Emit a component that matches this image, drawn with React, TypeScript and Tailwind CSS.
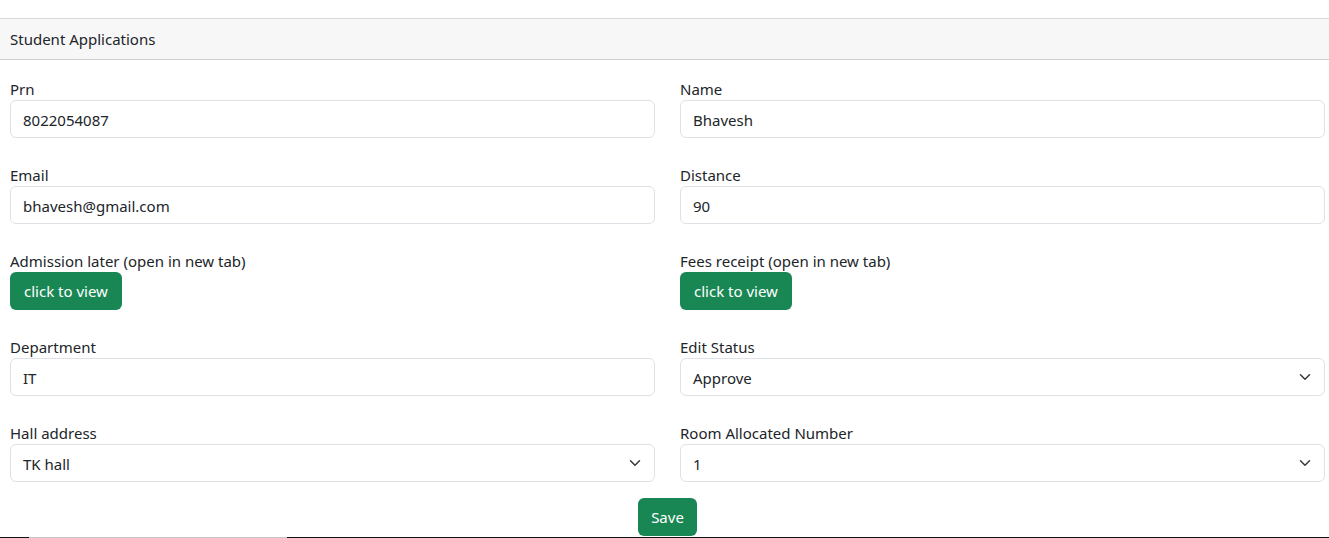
import React from "react";

const font = { fontFamily: '"Segoe UI", "Noto Sans", "Open Sans", sans-serif' };

function Chevron() {
  return (
    <svg
      width="16"
      height="12"
      viewBox="0 0 16 16"
      className="pointer-events-none absolute right-[12px] top-1/2 -translate-y-1/2"
    >
      <path
        d="m2 5 6 6 6-6"
        fill="none"
        stroke="#343a40"
        strokeWidth="2"
        strokeLinecap="round"
        strokeLinejoin="round"
      />
    </svg>
  );
}

function Field({ label, value, select }: { label: string; value: string; select?: boolean }) {
  return (
    <div>
      <label className="block h-[22px] text-[15px] leading-[22px] text-[#212529]">{label}</label>
      <div className="relative">
        <div className="h-[38px] rounded-[6px] border border-[#dee2e6] bg-white pl-[12px] text-[15px] leading-[38px] text-[#212529]">
          {value}
        </div>
        {select && <Chevron />}
      </div>
    </div>
  );
}

function ViewButton({ label }: { label: string }) {
  return (
    <div>
      <label className="block h-[22px] text-[15px] leading-[22px] text-[#212529]">{label}</label>
      <button className="h-[38px] rounded-[6px] bg-[#198754] px-[14px] text-[15px] text-white">
        click to view
      </button>
    </div>
  );
}

export default function App() {
  return (
    <div className="h-[538px] overflow-hidden bg-white" style={font}>
      <div className="h-[18px]" />
      {/* card */}
      <div className="border-t border-[#d9d9d9]">
        <div className="flex h-[41px] items-center border-b border-[#d0d0d0] bg-[#f7f7f7] pl-[10px] text-[15px] text-[#212529]">
          Student Applications
        </div>
        <div className="pl-[10px] pr-[4px] pt-[18px]">
          <div className="grid grid-cols-2 gap-x-[25px] gap-y-[26px]">
            <Field label="Prn" value="8022054087" />
            <Field label="Name" value="Bhavesh" />
            <Field label="Email" value="bhavesh@gmail.com" />
            <Field label="Distance" value="90" />
            <ViewButton label="Admission later (open in new tab)" />
            <ViewButton label="Fees receipt (open in new tab)" />
            <Field label="Department" value="IT" />
            <Field label="Edit Status" value="Approve" select />
            <Field label="Hall address" value="TK hall" select />
            <Field label="Room Allocated Number" value="1" select />
          </div>
          <div className="mt-[16px] flex justify-center">
            <button className="h-[38px] w-[59px] rounded-[6px] bg-[#198754] text-[15px] text-white">
              Save
            </button>
          </div>
        </div>
      </div>
      <div className="mt-px flex h-px bg-[#111]">
        <div className="ml-[29px] w-[258px] bg-[#c4c4c4]" />
      </div>
    </div>
  );
}
